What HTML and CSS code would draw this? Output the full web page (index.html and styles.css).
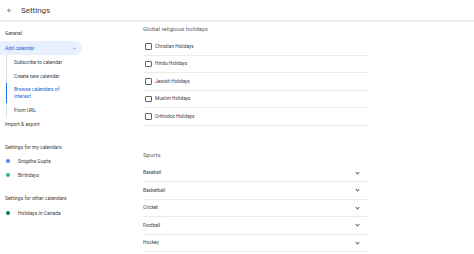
FILE: index.html
```html
<!DOCTYPE html>
<html lang="en">
<head>
    <meta charset="UTF-8">
    <title>Settings</title>
    <link rel="stylesheet" href="styles.css">
</head>
<body>
    <header class="topbar">
        <span class="back-arrow">
            <svg width="7" height="7" viewBox="0 0 24 24"><path d="M20 11H7.83l5.59-5.59L12 4l-8 8 8 8 1.41-1.41L7.83 13H20v-2z" fill="#5f6368"/></svg>
        </span>
        <span class="title">Settings</span>
    </header>

    <div class="page">
        <nav class="sidebar">
            <div class="nav-item">General</div>
            <div class="nav-item active">
                <span>Add calendar</span>
                <svg width="5" height="5" viewBox="0 0 24 24"><path d="M7.41 15.41L12 10.83l4.59 4.58L18 14l-6-6-6 6z" fill="#5f6368"/></svg>
            </div>
            <div class="sub-list">
                <div class="nav-item">Subscribe to calendar</div>
                <div class="nav-item">Create new calendar</div>
                <div class="nav-item two-line current">Browse calendars of<br>interest</div>
                <div class="nav-item">From URL</div>
            </div>
            <div class="nav-item">Import &amp; export</div>

            <div class="nav-item section">Settings for my calendars</div>
            <div class="nav-item cal"><span class="dot blue"></span>Snigdha Gupta</div>
            <div class="nav-item cal"><span class="dot green"></span>Birthdays</div>

            <div class="nav-item section">Settings for other calendars</div>
            <div class="nav-item cal"><span class="dot dark-green"></span>Holidays in Canada</div>
        </nav>

        <main class="content">
            <h2 class="group-title">Global religious holidays</h2>
            <div class="row"><span class="checkbox"></span>Christian Holidays</div>
            <div class="row"><span class="checkbox"></span>Hindu Holidays</div>
            <div class="row"><span class="checkbox"></span>Jewish Holidays</div>
            <div class="row"><span class="checkbox"></span>Muslim Holidays</div>
            <div class="row"><span class="checkbox"></span>Orthodox Holidays</div>

            <h2 class="group-title sports">Sports</h2>
            <div class="row expand"><span>Baseball</span><span class="chev"></span></div>
            <div class="row expand"><span>Basketball</span><span class="chev"></span></div>
            <div class="row expand"><span>Cricket</span><span class="chev"></span></div>
            <div class="row expand"><span>Football</span><span class="chev"></span></div>
            <div class="row expand"><span>Hockey</span><span class="chev"></span></div>
        </main>
    </div>
</body>
</html>
```

FILE: styles.css
```css
body {
    margin: 0;
    font-family: Roboto, "Liberation Sans", Arial, sans-serif;
    color: #3c4043;
    background: #fff;
    overflow: hidden;
}
.topbar {
    height: 20px;
    display: flex;
    align-items: center;
    border-bottom: 1px solid #e3e3e3;
    box-shadow: 0 1px 1px rgba(0, 0, 0, 0.06);
}
.back-arrow {
    display: flex;
    margin-left: 6px;
    width: 15px;
}
.title {
    font-size: 8px;
    color: #3c4043;
}
.page {
    display: flex;
}
/* left navigation */
.sidebar {
    width: 130px;
    flex-shrink: 0;
    padding-top: 5px;
    font-size: 5px;
}
.nav-item {
    height: 14px;
    line-height: 14px;
    padding-left: 5px;
    color: #3c4043;
}
.nav-item.active {
    margin-top: 1px;
    width: 72px;
    padding-right: 5px;
    display: flex;
    justify-content: space-between;
    align-items: center;
    background: #e8f0fe;
    color: #1967d2;
    border-radius: 0 7px 7px 0;
}
.sub-list {
    margin-left: 6px;
    border-left: 1px solid #dadce0;
    margin-top: 3px;
    margin-bottom: 6px;
}
.sub-list .nav-item {
    padding-left: 7px;
}
.sub-list .nav-item:first-child {
    margin-top: -3px;
}
.sub-list .nav-item:last-child {
    margin-bottom: -6px;
}
.nav-item.two-line {
    height: auto;
    line-height: 7px;
    padding-top: 3px;
    padding-bottom: 3px;
}
.nav-item.current {
    color: #1967d2;
    box-shadow: -1px 0 0 #1a73e8;
}
.nav-item.section {
    margin-top: 9px;
}
.nav-item.cal {
    display: flex;
    align-items: center;
}
.dot {
    width: 4px;
    height: 4px;
    border-radius: 50%;
    margin-left: 1px;
    margin-right: 8px;
}
.dot.blue { background: #4285f4; }
.dot.green { background: #33b679; }
.dot.dark-green { background: #0b8043; }
.cal:last-child {
    margin-top: 1px;
}
/* main settings panel */
.content {
    margin-left: 13px;
    padding-top: 1px;
    width: 225px;
}
.group-title {
    margin: 0 0 2px;
    height: 14px;
    line-height: 14px;
    font-size: 6px;
    font-weight: normal;
    color: #5f6368;
}
.group-title.sports {
    margin-top: 22px;
    margin-bottom: 3px;
}
.row {
    height: 16.5px;
    display: flex;
    align-items: center;
    font-size: 4.8px;
    color: #3c4043;
    border-bottom: 1px solid #ebebeb;
}
.checkbox {
    width: 4.5px;
    height: 4.5px;
    border: 1px solid #5f6368;
    border-radius: 1px;
    margin-left: 2px;
    margin-right: 3.5px;
}
.row.expand {
    justify-content: space-between;
}
.chev {
    width: 2px;
    height: 2px;
    border-right: 0.8px solid #5f6368;
    border-bottom: 0.8px solid #5f6368;
    transform: rotate(45deg);
    margin-right: 9px;
    margin-top: -1px;
}
```
